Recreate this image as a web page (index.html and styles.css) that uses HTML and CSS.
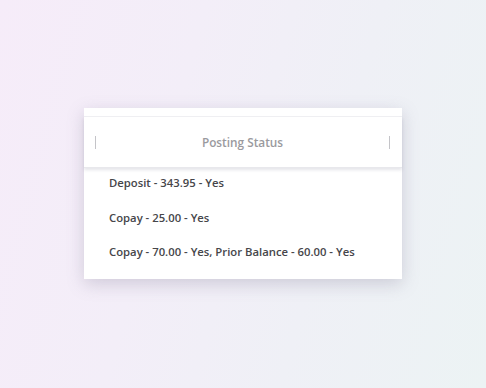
FILE: index.html
```html
<!DOCTYPE html>
<html>
<head>
<meta charset="utf-8">
<link rel="stylesheet" href="styles.css">
</head>
<body>
<div class="stage">
  <div class="card">
    <div class="topstrip"></div>
    <div class="header">
      <span class="pipe"></span>
      <span class="title">Posting Status</span>
      <span class="pipe"></span>
    </div>
    <div class="rows">
      <div class="row">Deposit - 343.95 - Yes</div>
      <div class="row">Copay - 25.00 - Yes</div>
      <div class="row">Copay - 70.00 - Yes, Prior Balance - 60.00 - Yes</div>
    </div>
  </div>
</div>
</body>
</html>
```
FILE: styles.css
```css
html, body {
  margin: 0;
  padding: 0;
}
body {
  width: 486px;
  height: 388px;
  background: linear-gradient(105deg, #f6ecf9 0%, #f3eef8 35%, #eff0f6 65%, #ecf3f4 100%);
  font-family: "Open Sans", sans-serif;
  overflow: hidden;
}
.stage {
  padding: 108px 0 0 84px;
}
.card {
  width: 318px;
  height: 171px;
  background: #fff;
  box-shadow: 0 5px 16px rgba(120, 110, 140, 0.28);
  display: flex;
  flex-direction: column;
}
.topstrip {
  height: 8px;
  border-bottom: 1px solid #f0f0f3;
}
.header {
  height: 50px;
  display: flex;
  align-items: center;
  justify-content: space-between;
  padding: 0 12px 0 11px;
  box-shadow: 0 2px 3px rgba(150, 150, 170, 0.25);
  border-bottom: 1px solid #e8e8ec;
  position: relative;
  z-index: 1;
}
.pipe {
  width: 1px;
  height: 13px;
  background: #c4c4c8;
}
.title {
  font-size: 11.8px;
  color: #9a9a9e;
  font-weight: 600;
}
.rows {
  display: flex;
  flex-direction: column;
  padding: 7px 0 0 25px;
}
.row {
  height: 34.5px;
  line-height: 16px;
  font-size: 11.3px;
  color: #46464a;
  font-weight: 600;
}
```
